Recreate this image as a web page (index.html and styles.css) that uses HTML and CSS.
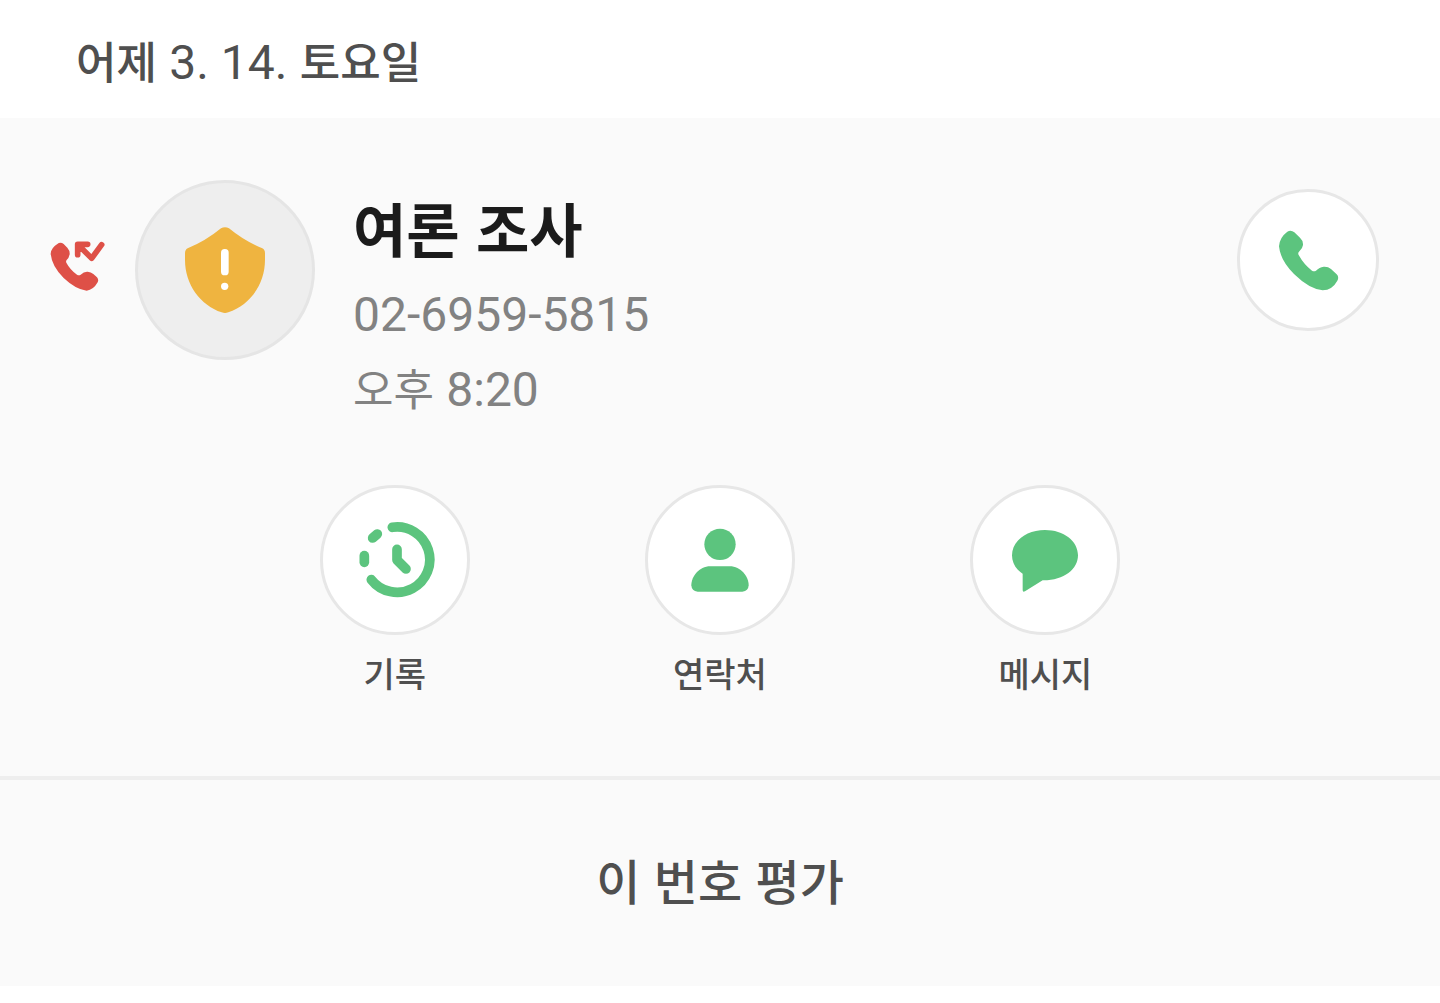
FILE: index.html
```html
<!DOCTYPE html>
<html lang="ko">
<head>
  <meta charset="UTF-8" />
  <meta name="viewport" content="width=device-width, initial-scale=1.0" />
  <title>통화 기록</title>
  <link rel="stylesheet" href="styles.css">
</head>
<body>
  <h2 class="date-header">어제 <span class="num">3. 14.</span> 토요일</h2>

  <main class="call-card">
    <div class="call-row">
      <svg class="missed-icon" viewBox="0 0 168 156" aria-hidden="true">
        <path fill="#de5047" d="M22 9Q31 2 41 9L52 20Q60 29 59 40Q57 51 50 57Q47 60 49 65Q61 87 81 101Q87 104 92 101Q102 91 113 92Q123 93 130 99L141 109Q147 116 143 124Q130 147 110 149Q78 146 41 111Q5 75 2 38Q3 21 22 9Z"/>
        <path fill="none" stroke="#de5047" stroke-width="17" stroke-linecap="round" stroke-linejoin="round" d="M83 41V10H113M88 15L125 52L155 11"/>
        <path fill="#de5047" d="M83 10H108L83 35Z"/>
      </svg>

      <div class="avatar">
        <svg class="shield-icon" viewBox="0 0 240 258" aria-hidden="true">
          <path fill="#efb440" d="M108 4Q120 -3 132 4Q178 42 232 64Q240 68 240 79V98C240 173 194 234 130 256Q120 260 110 256C46 234 0 173 0 98V79Q0 68 8 64Q62 42 108 4Z"/>
          <rect fill="#fff" x="108" y="66" width="23" height="79" rx="11"/>
          <circle fill="#fff" cx="119" cy="178" r="11"/>
        </svg>
      </div>

      <div class="call-info">
        <h1 class="caller">여론 조사</h1>
        <div class="detail num">02-6959-5815</div>
        <div class="detail">오후 <span class="num">8:20</span></div>
      </div>

      <button class="round-button call-button" type="button" aria-label="전화 걸기">
        <svg class="phone-icon" viewBox="174 177 183 183" aria-hidden="true">
          <path d="M202 182Q213 176 223 184L240 200Q250 209 249 222Q248 233 237 242Q233 246 236 252Q252 281 276 299Q282 303 288 299Q298 288 311 287Q324 286 333 294L350 310Q358 318 352 329Q337 357 308 358Q268 354 222 309Q181 268 177 226Q178 200 202 182Z"/>
        </svg>
      </button>
    </div>

    <div class="actions">
      <button class="action" type="button">
        <span class="round-button">
          <svg class="action-icon line" viewBox="0 0 240 240" aria-hidden="true">
            <path d="M112 22A98 98 0 1 1 49 179"/>
            <path d="M53 54L67 42"/>
            <path d="M28 107V127"/>
            <path d="M126 88V120L153 147"/>
          </svg>
        </span>
        <span class="action-label">기록</span>
      </button>
      <button class="action" type="button">
        <span class="round-button">
          <svg class="action-icon" viewBox="0 0 240 240" aria-hidden="true">
            <circle cx="120" cy="73" r="47"/>
            <path d="M91 139H149C183 139 206 170 206 196Q205 214 187 215H53Q35 214 34 196C34 170 57 139 91 139Z"/>
          </svg>
        </span>
        <span class="action-label">연락처</span>
      </button>
      <button class="action" type="button">
        <span class="round-button">
          <svg class="action-icon" viewBox="0 0 240 240" aria-hidden="true">
            <path d="M120 30C176 30 219 63 219 106C219 148 176 182 113 181L60 214Q53 218 53 210V161C32 148 21 128 21 106C21 63 64 30 120 30Z"/>
          </svg>
        </span>
        <span class="action-label">메시지</span>
      </button>
    </div>

    <button class="rate-button" type="button">이 번호 평가</button>
  </main>
</body>
</html>
```

FILE: styles.css
```css
* {
  box-sizing: border-box;
}

body {
  margin: 0;
  font-family: "Noto Sans CJK KR", sans-serif;
  background: #fff;
  color: #4f4f4f;
}

h1, h2 {
  margin: 0;
}

button {
  margin: 0;
  padding: 0;
  border: 0;
  background: none;
  font-family: inherit;
  color: inherit;
  cursor: pointer;
}

svg {
  display: block;
}

.num {
  font-family: Roboto, sans-serif;
  font-size: 48px;
  font-weight: 400;
}

.date-header {
  padding: 24px 76px 19px;
  font-size: 44px;
  font-weight: 500;
  line-height: 72px;
}

.call-card {
  background: #fafafa;
}

.call-row {
  display: flex;
  align-items: flex-start;
  padding: 62px 61px 0 50px;
}

.missed-icon {
  width: 56px;
  height: 52px;
  margin: 61px 29px 0 0;
}

.avatar {
  display: flex;
  align-items: center;
  justify-content: center;
  width: 180px;
  height: 180px;
  border: 3px solid #e5e5e5;
  border-radius: 50%;
  background: #eee;
}

.shield-icon {
  width: 80px;
  height: 86px;
}

.call-info {
  flex: 1;
  margin-left: 38px;
}

.caller {
  padding: 7px 0 12px;
  font-size: 58px;
  font-weight: 700;
  line-height: 80px;
  color: #1b1b1b;
}

.detail {
  line-height: 72px;
  color: #828282;
}

.detail:not(.num) {
  font-size: 44px;
}

.round-button {
  display: flex;
  align-items: center;
  justify-content: center;
  width: 150px;
  height: 150px;
  border: 3px solid #e7e7e7;
  border-radius: 50%;
  background: #fff;
  fill: #5cc47e;
}

.call-button {
  width: 142px;
  height: 142px;
  margin-top: 9px;
}

.phone-icon {
  width: 61px;
  height: 61px;
}

.actions {
  display: grid;
  grid-template-columns: repeat(3, 1fr);
  padding: 59px 232px 77px;
}

.action {
  display: flex;
  flex-direction: column;
  align-items: center;
  gap: 12px;
}

.action-icon {
  width: 80px;
  height: 80px;
}

.line {
  fill: none;
  stroke: #5cc47e;
  stroke-width: 29px;
  stroke-linecap: round;
  stroke-linejoin: round;
}

.action-label {
  font-size: 34px;
  font-weight: 500;
  line-height: 52px;
}

.rate-button {
  display: block;
  width: 100%;
  padding: 63px 0 71px;
  border-top: 4px solid #eee;
  font-size: 48px;
  font-weight: 500;
  line-height: 72px;
}
```
